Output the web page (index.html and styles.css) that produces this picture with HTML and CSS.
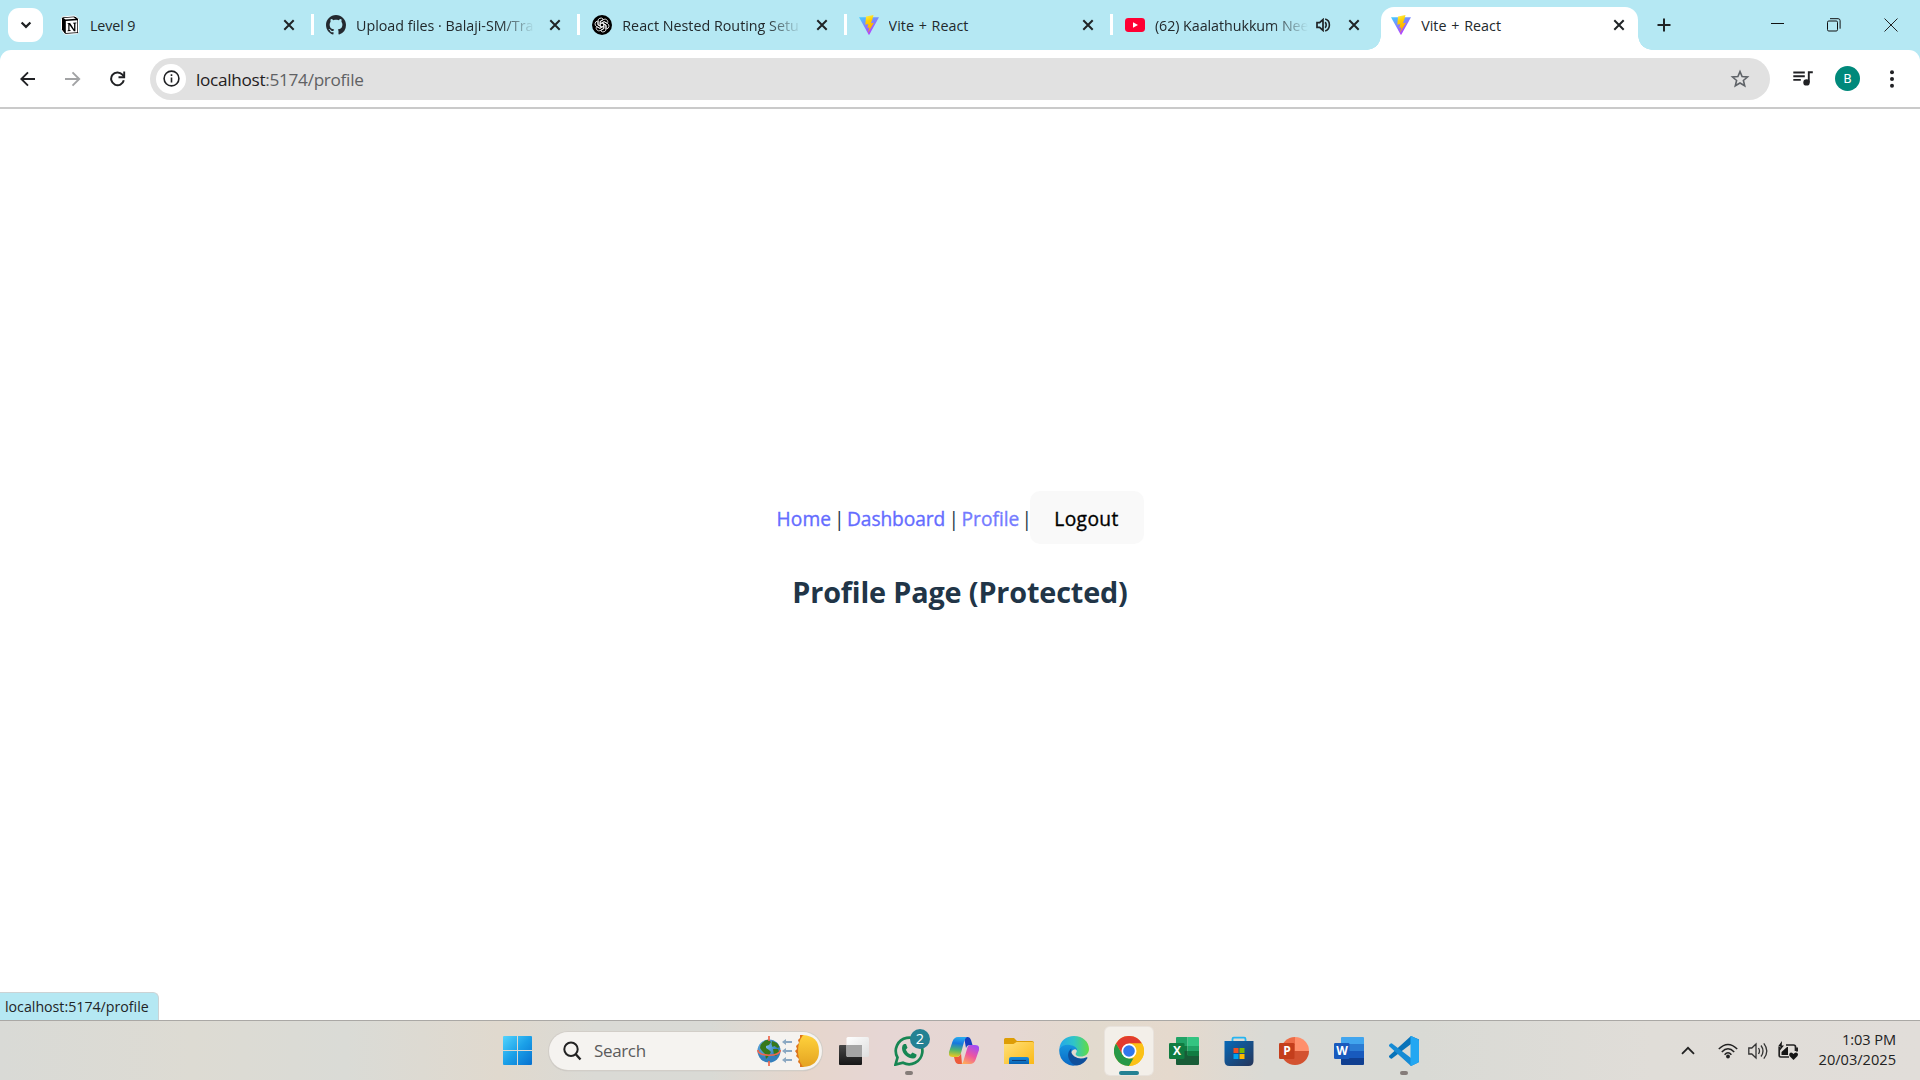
FILE: index.html
```html
<!DOCTYPE html>
<html lang="en">
<head>
<meta charset="utf-8">
<title>Vite + React</title>
<link rel="stylesheet" href="styles.css">
</head>
<body>
<svg class="defs" width="0" height="0" aria-hidden="true">
  <defs>
    <linearGradient id="viteBlue" x1="0" y1="0" x2="0.6" y2="1"><stop offset="0" stop-color="#41d1ff"/><stop offset="1" stop-color="#bd34fe"/></linearGradient>
    <linearGradient id="viteBolt" x1="0.4" y1="0" x2="0.6" y2="1"><stop offset="0" stop-color="#ffea45"/><stop offset="0.3" stop-color="#ffd000"/><stop offset="1" stop-color="#ff9c00"/></linearGradient>
    <symbol id="vite" viewBox="0 0 20 20">
      <path d="M0 2.2 20 2.2 10.4 19.6Q10 20.2 9.600 19.600Z" fill="url(#viteBlue)"/>
      <path d="M14.500 0 7 1.500 6.300 9.700l3-.6-.9 4 2.100-.6-1.600 5.500 6-10.300-3 .6 1.500-4z" fill="url(#viteBolt)"/>
    </symbol>
    <symbol id="close" viewBox="0 0 12 12"><path d="M1.3 1.3l9.4 9.4M10.7 1.3L1.3 10.7" stroke="#202426" stroke-width="2" fill="none"/></symbol>
  </defs>
</svg>

<header class="tabstrip">
  <button class="tab-search" aria-label="Search tabs"><svg width="12" height="8" viewBox="0 0 12 8"><path d="M1.6 1.5 6 5.9l4.4-4.4" fill="none" stroke="#1f2123" stroke-width="2.2"/></svg></button>
  <div class="tab first">
    <svg class="fav" viewBox="0 0 20 20"><path d="M1.500 3.500Q1.500 2 3 1.800L14 1q1 0 2 .7L18.500 3.800V17.500q0 1-1 1.100L6 19.300q-1 0-1.600-.8L1.500 14.800z" fill="#000" stroke="#fff" stroke-width="1"/><path d="M3.500 3 13.500 2.200l2.300 1.600-10.300.8z" fill="#fff"/><path d="M5.800 6 17.300 5.300V17.200l-11.500.8z" fill="#fff"/><path d="M7.500 8h2.600l4 6.200V8.700l-1-.3v-.7l3.300-.2v.7l-1 .4v7.700h-1.500L9.500 9.900v5.200l1.300.4v.6l-3.400.2v-.6l.9-.4V8.800L7.500 8.600z" fill="#000"/></svg>
    <span class="title">Level 9</span>
    <svg class="x"><use href="#close"/></svg>
  </div>
  <div class="tab">
    <svg class="fav" viewBox="0 0 16 16"><path fill="#24292f" d="M8 0C3.58 0 0 3.58 0 8c0 3.54 2.29 6.53 5.47 7.59.4.07.55-.17.55-.38 0-.19-.01-.82-.01-1.49-2.01.37-2.53-.49-2.69-.94-.09-.23-.48-.94-.82-1.13-.28-.15-.68-.52-.01-.53.63-.01 1.08.58 1.23.82.72 1.21 1.87.87 2.33.66.07-.52.28-.87.51-1.07-1.78-.2-3.64-.89-3.64-3.95 0-.87.31-1.59.82-2.15-.08-.2-.36-1.02.08-2.12 0 0 .67-.21 2.2.82.64-.18 1.32-.27 2-.27s1.36.09 2 .27c1.53-1.04 2.2-.82 2.2-.82.44 1.1.16 1.92.08 2.12.51.56.82 1.27.82 2.15 0 3.07-1.87 3.75-3.65 3.95.29.25.54.73.54 1.48 0 1.07-.01 1.93-.01 2.2 0 .21.15.46.55.38A8.01 8.01 0 0 0 16 8c0-4.42-3.58-8-8-8z"/></svg>
    <span class="title fade upload">Upload files · Balaji-SM/Tra</span>
    <svg class="x"><use href="#close"/></svg>
  </div>
  <div class="tab">
    <svg class="fav" viewBox="0 0 20 20"><circle cx="10" cy="10" r="10"/><g fill="none" stroke="#fff" stroke-width=".8"><path id="petal" d="M8.300 10.900V6.300l3.200-1.800a2.900 2.900 0 0 1 4.200 3.400M8.300 8.600 12 6.600l3.600 2"/><use href="#petal" transform="rotate(60 10 10)"/><use href="#petal" transform="rotate(120 10 10)"/><use href="#petal" transform="rotate(180 10 10)"/><use href="#petal" transform="rotate(240 10 10)"/><use href="#petal" transform="rotate(300 10 10)"/></g></svg>
    <span class="title fade react">React Nested Routing Setu</span>
    <svg class="x"><use href="#close"/></svg>
  </div>
  <div class="tab">
    <svg class="fav"><use href="#vite"/></svg>
    <span class="title vite-title">Vite + React</span>
    <svg class="x"><use href="#close"/></svg>
  </div>
  <div class="tab">
    <svg class="fav" viewBox="0 0 20 20"><rect y="3" width="20" height="14" rx="3.4" fill="#ff0033"/><path d="M8 7.2v5.6l5-2.8z" fill="#fff"/></svg>
    <span class="title fade tube">(62) Kaalathukkum Nee</span>
    <svg class="sound" width="15" height="14" viewBox="0 0 15 14"><path d="M1 4.7h2.6L7 1.6v10.8L3.6 9.3H1z" fill="none" stroke="#202426" stroke-width="1.7"/><path d="M9 4.2c1.6 1 1.6 4.6 0 5.6M9.2 1.1c5.6 1.6 5.6 10.2 0 11.8" fill="none" stroke="#202426" stroke-width="1.6"/></svg>
    <svg class="x"><use href="#close"/></svg>
  </div>
  <div class="tab active">
    <svg class="fav"><use href="#vite"/></svg>
    <span class="title vite-title">Vite + React</span>
    <svg class="x"><use href="#close"/></svg>
  </div>
  <svg class="newtab" width="14" height="14" viewBox="0 0 14 14"><path d="M7 .5v13M.5 7h13" stroke="#202426" stroke-width="2"/></svg>
  <div class="window-controls">
    <svg width="14" height="14" viewBox="0 0 14 14"><path d="M0 5.500h13" stroke="#111" stroke-width="1"/></svg>
    <svg width="14" height="14" viewBox="0 0 14 14"><g fill="none" stroke="#111"><rect x=".5" y="3" width="10" height="10" rx="1.3"/><path d="M3 .7h8.100q2 0 2 2v8"/></g></svg>
    <svg width="14" height="14" viewBox="0 0 14 14"><path d="M.5 .5l13 13M13.500 .5l-13 13" stroke="#222" stroke-width="1"/></svg>
  </div>
</header>

<div class="toolbar-bg">
<nav class="toolbar">
  <svg width="16" height="16" viewBox="0 0 16 16"><path d="M15 8H1.600M8 1.300 1.300 8 8 14.700" fill="none" stroke="#202124" stroke-width="1.900"/></svg>
  <svg width="16" height="16" viewBox="0 0 16 16"><path d="M0 8h13.900M7.500 1.300 14.200 8 7.500 14.700" fill="none" stroke="#a2a3a5" stroke-width="1.900"/></svg>
  <svg width="16" height="16" viewBox="0 0 16 16"><path d="M13.800 9.200A6.400 6.400 0 1 1 12.400 3.600L14.100 5.500" fill="none" stroke="#202124" stroke-width="2"/><path d="M14.200 .5v5.700H8.500" fill="none" stroke="#202124" stroke-width="1.900"/></svg>
  <div class="omnibox">
    <span class="info"><svg width="17" height="17" viewBox="0 0 17 17"><circle cx="8.500" cy="8.500" r="7.400" fill="none" stroke="#202124" stroke-width="1.600"/><path d="M8.500 7.500v5M8.500 4.300v1.800" stroke="#202124" stroke-width="1.600"/></svg></span>
    <span class="url"><b>localhost</b>:5174/profile</span>
    <svg class="star" width="20" height="20" viewBox="0 0 20 20"><path d="M10 2.600l2.100 5 5.400.4-4.100 3.500 1.300 5.300L10 14l-4.700 2.800 1.300-5.300L2.500 8l5.400-.4z" fill="none" stroke="#5f6368" stroke-width="1.600"/></svg>
  </div>
  <svg class="media" width="20" height="16" viewBox="0 0 20 16"><path d="M.3 1.500h11.500M.3 5.200h11.500M.3 8.900h7.500M15.800 11.500V1.300h4" fill="none" stroke="#202124" stroke-width="1.900"/><circle cx="13.500" cy="11.400" r="3.200" fill="#202124"/></svg>
  <span class="avatar">B</span>
  <svg class="dots" width="6" height="20" viewBox="0 0 6 20"><g fill="#202124"><circle cx="3" cy="3.200" r="2"/><circle cx="3" cy="10" r="2"/><circle cx="3" cy="16.800" r="2"/></g></svg>
</nav>
</div>

<main class="page">
  <div class="links"><a class="home">Home</a><i>|</i><a class="dash">Dashboard</a><i>|</i><a class="profile">Profile</a><i class="last">|</i><button class="logout">Logout</button></div>
  <h2>Profile Page (Protected)</h2>
  <div class="status">localhost:5174/profile</div>
</main>

<footer class="taskbar">
  <svg class="start" width="29" height="29" viewBox="0 0 29 29"><defs><linearGradient id="win" gradientUnits="userSpaceOnUse" x1="0" y1="0" x2="29" y2="29"><stop offset="0" stop-color="#53d4fd"/><stop offset=".5" stop-color="#1ba0e8"/><stop offset="1" stop-color="#0670cf"/></linearGradient></defs><path d="M1 0h13v14H0V1q0-1 1-1zM15 0h13q1 0 1 1v13H15zM0 15h14v14H1q-1 0-1-1zM15 15h14v13q0 1-1 1H15z" fill="url(#win)"/></svg>
  <div class="search">
    <svg width="19" height="20" viewBox="0 0 19 20"><circle cx="8" cy="8.300" r="6.700" fill="none" stroke="#222" stroke-width="2"/><path d="M12.800 13.300 17.500 18.500" stroke="#222" stroke-width="2.400"/></svg>
    <span>Search</span>
    <svg class="equinox" width="64" height="34" viewBox="0 0 64 34">
      <defs><radialGradient id="sea" cx=".35" cy=".3"><stop offset="0" stop-color="#79c0f2"/><stop offset="1" stop-color="#347fbc"/></radialGradient><linearGradient id="sun" x1="0" y1="0" x2="0" y2="1"><stop offset="0" stop-color="#ffd23c"/><stop offset="1" stop-color="#e4a321"/></linearGradient></defs>
      <circle cx="12" cy="17" r="11.500" fill="url(#sea)"/>
      <path d="M3.500 11Q8 5 12 6l2 2-2 3-3 1 0 2 3 2 2 2-3 5-2 2-1-5-3-3-2-3zM15 7l5 2 2.500 4-2 1-3-2-2 1-1-3zM16 15l5 0 1 3-3 4-2-1z" fill="#37781a"/>
      <path d="M12 2v5M12 27v5" stroke="#ee674e" stroke-width="1.700"/>
      <path d="M.8 16c0 7 22.500 7 22.500 0" fill="none" stroke="#ee674e" stroke-width="1.600"/>
      <g fill="#8ba8c2"><path d="M25 8l4-3v2h6v2h-6v2zM25 17l4-3v2h6v2h-6v2zM25 26l4-3v2h6v2h-6v2z"/></g>
      <path d="M47 1h-4l0 3-2 2 1 3-3 3 1 3-2 2 2 3-1 2 3 3-1 3 2 2 0 3h4z" fill="#dd741b"/>
      <path d="M46 1q16 1 16 16T46 33Q41 26 41 17T46 1z" fill="url(#sun)"/>
    </svg>
  </div>
  <div class="apps">
    <div class="app"><svg viewBox="0 0 30 30"><defs><linearGradient id="tv" x2="0" y2="1"><stop stop-color="#474747"/><stop offset="1" stop-color="#161616"/></linearGradient><linearGradient id="tw" x2="1" y2="1"><stop stop-color="#fff"/><stop offset="1" stop-color="#dedede"/></linearGradient></defs><rect y="9" width="23" height="20" rx="1" fill="url(#tv)"/><rect x="7.500" y="1" width="22.500" height="20" rx="1.500" fill="url(#tw)"/><path d="M7.500 9H23v12H9q-1.500 0-1.500-1.500z" fill="#a5a5a5"/></svg></div>
    <div class="app"><svg viewBox="0 0 30 30"><path d="M1.500 28.600 3.500 21.500A13.300 13.300 0 1 1 9 26.800z" fill="none" stroke="#178653" stroke-width="2.700"/><path d="M10 8q-2 1-2 4c0 6 6 10.500 11 10.500 2.500 0 3.800-2 3.500-4L18.500 16.500 16.500 18.500Q13 17 11.800 13.800L13.500 11.800 12 8z" fill="#178653"/></svg><span class="count">2</span><span class="run"></span></div>
    <div class="app"><svg viewBox="0 0 30 30"><defs><linearGradient id="cp1" x1=".3" y1="0" x2=".2" y2="1"><stop stop-color="#28a9ed"/><stop offset=".3" stop-color="#1677df"/><stop offset=".65" stop-color="#52b66b"/><stop offset="1" stop-color="#f3c91c"/></linearGradient><linearGradient id="cp2" x1=".7" y1="0" x2=".2" y2="1"><stop stop-color="#a34cf4"/><stop offset=".5" stop-color="#ee55a0"/><stop offset="1" stop-color="#ffae58"/></linearGradient></defs><path d="M15 1h4q2 0 3 3l1.500 5H21q-3 0-4 3z" fill="#173fc0"/><path d="M9 1h9q-2 1-3 5l-3 11q-1 4-5 4H4q-5 0-4-5L3.500 5.500Q5 1 9 1z" fill="url(#cp1)"/><path d="M13 28H9q-2 0-3-3l-1-4h3q3 0 4-4z" fill="#ed5b3b"/><path d="M21 9h5q5 0 4 5l-3.500 10q-1.500 4-5.500 4h-9q2 0 3-5l3-10q1-4 3-4z" fill="url(#cp2)"/></svg></div>
    <div class="app"><svg viewBox="0 0 30 30"><defs><linearGradient id="fold" x2="1" y2="1"><stop stop-color="#ffe078"/><stop offset="1" stop-color="#fbb917"/></linearGradient><linearGradient id="fb" x2="0" y2="1"><stop stop-color="#188cd9"/><stop offset="1" stop-color="#0862b4"/></linearGradient></defs><path d="M0 3.500Q0 2 1.500 2H10l3 3h15q2 0 2 2v8H0z" fill="#dd9d05"/><path d="M0 8h9.500l3-2H28.500Q30 6 30 7.500V28H0z" fill="url(#fold)"/><path d="M5 28v-5q0-2 2-2h16q2 0 2 2v5z" fill="url(#fb)"/><path d="M8 24.500h14" stroke="#0c3d79" stroke-width="1"/></svg></div>
    <div class="app"><svg viewBox="0 0 30 30"><defs><linearGradient id="ed1" x2="1"><stop stop-color="#23a8ec"/><stop offset=".5" stop-color="#30c5c7"/><stop offset="1" stop-color="#61dc43"/></linearGradient><linearGradient id="ed2" x2="0" y2="1"><stop stop-color="#1796df"/><stop offset="1" stop-color="#0a68c4"/></linearGradient></defs><path d="M.3 13C1 5 7 0 15 0c9 0 15 6 15 13 0 5-4 7.500-8 7.500-5 0-6-2-5-3.500 2-2 0-6-4-7Q5 8 .3 13z" fill="url(#ed1)"/><path d="M.3 13Q4 8 11 9q7 1 7.500 6Q17 12 14 14c-5 4-1 12 4 15Q12 31 6.500 27 -.5 22 .3 13z" fill="url(#ed2)"/><path d="M12.500 12.500c-7 5-2 16 5.500 17q7-1 10.500-7.500.3-1-1-.8Q21 24 15.500 20.500 11 17 12.500 12.500z" fill="#0e4f9c"/></svg></div>
    <div class="app current"><svg viewBox="0 0 30 30"><circle cx="15" cy="15" r="15" fill="#fbc116"/><path d="M2 7.500A15 15 0 0 1 28 7.500H15L8.500 18.800z" fill="#e23b2e"/><path d="M2 7.500 8.500 18.800 15 22.500h6.500L15 30A15 15 0 0 1 2 7.500z" fill="#279847"/><path d="M21.500 18.800 15 30A15 15 0 0 0 28 7.500H15z" fill="#fbc116"/><circle cx="15" cy="15" r="7.500" fill="#fff"/><circle cx="15" cy="15" r="5.800" fill="#3077ed"/></svg><span class="run wide"></span></div>
    <div class="app"><svg viewBox="0 0 30 30"><path d="M8 1h10.500v9H7V2q0-1 1-1z" fill="#21a366"/><path d="M18.500 1H29q1 0 1 1v8H18.500z" fill="#33c481"/><path d="M7 10h11.500v9H7z" fill="#107c41"/><path d="M18.500 10H30v9H18.500z" fill="#21a366"/><path d="M7 15h11.500v4H30v9q0 1-1 1H8q-1 0-1-1z" fill="#185c37"/><path d="M18.500 15H30v5H18.500z" fill="#107c41"/><rect y="7" width="15.500" height="16" rx="1.300" fill="#107c41"/></svg><span class="letter">X</span></div>
    <div class="app"><svg viewBox="0 0 30 30"><defs><linearGradient id="st" x2="1" y2="1"><stop stop-color="#0769b8"/><stop offset="1" stop-color="#263559"/></linearGradient></defs><path d="M8.500 7V3q0-1.300 1.300-1.300h10.400q1.300 0 1.300 1.300v4" fill="none" stroke="#25b5f2" stroke-width="1.800"/><path d="M.5 5h29v20q0 5-5 5h-19q-5 0-5-5z" fill="url(#st)"/><path d="M9.500 12h5v5h-5z" fill="#f25022"/><path d="M15.500 12h5v5h-5z" fill="#7fba00"/><path d="M9.500 18h5v5h-5z" fill="#00a4ef"/><path d="M15.500 18h5v5h-5z" fill="#ffb900"/></svg></div>
    <div class="app"><svg viewBox="0 0 30 30"><path d="M16 1a14 14 0 0 0-14 14h14z" fill="#ed6c47"/><path d="M16 1a14 14 0 0 1 14 14H16z" fill="#ff8f6b"/><path d="M2 15h28a14 14 0 0 1-28 0z" fill="#d35230"/><rect y="7" width="15.500" height="16" rx="1.300" fill="#c43e1c"/></svg><span class="letter">P</span></div>
    <div class="app"><svg viewBox="0 0 30 30"><path d="M8 1h21q1 0 1 1v6H7V2q0-1 1-1z" fill="#41a5ee"/><path d="M7 8h23v7H7z" fill="#2b7cd3"/><path d="M7 15h23v7H7z" fill="#185abd"/><path d="M7 22h23v6q0 1-1 1H8q-1 0-1-1z" fill="#103f91"/><rect y="7" width="15.500" height="16" rx="1.300" fill="#185abd"/></svg><span class="letter">W</span></div>
    <div class="app"><svg viewBox="0 0 30 30"><path d="M22 0 30 3.500V26L22 30V8L3 22.500Q2 23 1.300 22.300L.2 21.200q-.7-.8 0-1.500z" fill="#0873b9"/><path d="M22 30 .2 10.300q-.7-.8 0-1.500L1.300 7.700Q2 7 3 7.500L22 22z" fill="#168bd5"/><path d="M22 0q6 2.700 7 3.200 1 .5 1 1.800v20q0 1.300-1 1.800L22 30q-1 0-.500-1V1q-.5-1 .5-1z" fill="#23a7f2"/></svg><span class="run"></span></div>
  </div>
  <div class="tray">
    <svg class="up" width="14" height="9" viewBox="0 0 14 9"><path d="M1 7.800 7 1.800l6 6" fill="none" stroke="#222" stroke-width="1.800"/></svg>
    <svg width="20" height="16" viewBox="0 0 20 16"><g fill="none" stroke="#222" stroke-width="1.500"><path d="M.8 6Q10-3 19.200 6M3.800 9Q10 2.500 16.200 9M6.600 11.700Q10 8 13.400 11.700"/></g><circle cx="10" cy="13.500" r="1.900" fill="#222"/></svg>
    <svg width="20" height="18" viewBox="0 0 20 18"><g fill="none" stroke="#333" stroke-width="1.300"><path d="M.8 6h3L8 2v14l-4.200-4h-3zM10.500 6q2 3 0 6M13 3.500q4 5.500 0 11M15.800 1.300q6 7.700 0 15.400"/></g></svg>
    <svg width="21" height="20" viewBox="0 0 21 20"><path d="M8 4h7.500q2 0 2 2v4M1.200 9v5.500q0 1.500 1.500 1.500H11M1.200 6v3" fill="none" stroke="#222" stroke-width="1.700"/><path d="M3.500 14V11L9 6h1v8zM4 0 0 5.500h2.500L1.500 10 6 4.500H3.700z" fill="#151515"/><path d="M19 6.500v4" stroke="#222" stroke-width="2"/><path d="M15.500 19 11.500 15q-1-3 1.500-3.500 1.500 0 2.500 1.500 1-1.500 2.500-1.500 3 .5 1.500 3.500z" fill="#151515"/></svg>
    <div class="clock"><span>1:03 PM</span><span class="date">20/03/2025</span></div>
  </div>
</footer>
</body>
</html>
```
FILE: styles.css
```css
* { box-sizing: border-box; }
body {
  margin: 0;
  width: 1920px;
  height: 1080px;
  overflow: hidden;
  display: flex;
  flex-direction: column;
  background: #fff;
  font-family: "Open Sans", "Noto Sans", sans-serif;
}
svg { display: block; flex: none; }
.defs { position: absolute; }
button { border: 0; padding: 0; font-family: inherit; }

/* Tab strip */
.tabstrip { height: 50px; flex: none; display: flex; align-items: center; background: #b5e8f3; padding-left: 8px; }
.tab-search { width: 35px; height: 34px; border-radius: 11px; background: #fff; display: flex; align-items: center; justify-content: center; }
.tab { width: 266.3px; height: 50px; flex: none; display: flex; align-items: center; padding: 0 16px 0 12px; border-right: 3px solid transparent; border-image: linear-gradient(transparent 14px, #fff 14px, #fff 35px, transparent 35px) 1; }
.tab.first { width: 271px; padding-left: 17px; }
.tab:nth-child(6) { border-image: none; }
.fav { width: 20px; height: 20px; margin-right: 10px; }
.title { flex: 1; min-width: 0; overflow: hidden; white-space: nowrap; padding-top: 2px; font-size: 14.3px; line-height: 24px; color: #22292c; letter-spacing: -.12px; }
.upload { letter-spacing: -.02px; }
.react { letter-spacing: 0; }
.tube { letter-spacing: -.06px; }
.vite-title { letter-spacing: .02px; word-spacing: 1px; }
.fade { -webkit-mask-image: linear-gradient(90deg, #000 calc(100% - 36px), transparent); mask-image: linear-gradient(90deg, #000 calc(100% - 36px), transparent); }
.x { width: 12px; height: 12px; margin-left: 14px; }
.sound { margin-left: 8px; }
.sound + .x { margin-left: 17px; }
.tab.active { position: relative; width: 257px; height: 43px; align-self: flex-end; margin-left: 2px; padding: 0 13px 7px 10px; border: 0; background: #fff; border-radius: 13px 13px 0 0; }
.active::before, .active::after { content: ""; position: absolute; bottom: 0; width: 14px; height: 14px; }
.active::before { left: -14px; background: radial-gradient(circle at 0 0, transparent 13.5px, #fff 14px); }
.active::after { right: -14px; background: radial-gradient(circle at 100% 0, transparent 13.5px, #fff 14px); }
.newtab { margin-left: 19px; }
.window-controls { display: flex; gap: 43px; margin-left: auto; padding-right: 22px; }
.window-controls svg:first-child { margin-right: -1px; }

/* Toolbar */
.toolbar-bg { flex: none; background: #b5e8f3; }
.toolbar { height: 59px; background: #fff; border-radius: 11px 11px 0 0; border-bottom: 2px solid #cacaca; display: flex; align-items: center; padding: 0 25px 0 20px; gap: 29px; }
.omnibox { width: 1620px; height: 42px; margin-left: -5px; border-radius: 21px; background: #e1e1e1; display: flex; align-items: center; padding: 0 20px 0 6px; }
.info { width: 30px; height: 30px; border-radius: 50%; background: #fff; display: flex; align-items: center; justify-content: center; }
.url { flex: 1; margin-left: 10px; padding-top: 1px; font-size: 17.2px; color: #5f6164; letter-spacing: -.3px; }
.url b { font-weight: 400; color: #1f2022; }
.media { margin-left: -6px; }
.avatar { width: 25px; height: 25px; margin-left: -7px; border-radius: 50%; background: #00897b; color: #fff; font: 13px/25px Roboto, sans-serif; text-align: center; }

/* Page */
.page { position: relative; flex: 1; display: flex; flex-direction: column; align-items: center; padding-top: 382px; color: #213547; }
.links { display: flex; align-items: center; height: 53px; font-size: 19.2px; -webkit-text-stroke: .35px currentColor; white-space: nowrap; }
.links a { color: #646cff; padding-top: 1px; }
.links a.profile { color: #747bff; }
.links i { width: 15.5px; padding-top: 1px; text-align: center; font-style: normal; -webkit-text-stroke: 0; }
.links i.last { width: 9px; padding-left: 1px; text-align: left; }
.home { width: 55px; letter-spacing: .1px; }
.dash { width: 99px; letter-spacing: -.1px; }
.profile { width: 59px; }
.logout { width: 114px; height: 53px; padding-top: 1px; border-radius: 10px; background: #f9f9f9; color: #000; font-size: 19.2px; letter-spacing: .4px; -webkit-text-stroke: .35px #000; }
.page h2 { margin: 28px 0 0; font-size: 28.8px; line-height: 40px; font-weight: 700; letter-spacing: -.15px; white-space: nowrap; }
.status { position: absolute; left: 0; bottom: 0; width: 159px; height: 28px; padding-left: 5px; border: 1px solid #ccd3d5; border-width: 1px 1px 0 0; border-radius: 0 6px 0 0; background: #b5e8f3; color: #1f2426; font-size: 14.2px; line-height: 28px; }

/* Taskbar */
.taskbar { height: 60px; flex: none; display: flex; align-items: center; padding: 0 24px 0 503px; border-top: 1px solid #aaa8a5; background: linear-gradient(90deg, #d9dad6 0, #dddbd3 10%, #dadbd6 18%, #e0d9ce 26%, #dadad5 31%, #d9dad5 37%, #e6d6cc 42%, #e6d6d4 46%, #e6d7d3 52%, #e2dace 57%, #e5d9cd 61%, #dadad5 66%, #d9dad5 74%, #e0ddd8 86%, #e1ddd9 100%); }
.search { width: 273px; height: 38px; margin-left: 17px; border-radius: 19px; background: #f5f3f0; box-shadow: 0 0 0 1px #d2cec8, 0 1px 1px #aaa; display: flex; align-items: center; padding-left: 14px; color: #5b5b5b; font-size: 17px; }
.search span { width: 63px; margin-left: 12px; letter-spacing: -.35px; }
.equinox { margin-left: 100px; }
.apps { display: flex; gap: 7px; margin-left: 8px; }
.app { position: relative; width: 48px; height: 48px; display: flex; align-items: center; justify-content: center; border-radius: 5px; }
.app svg { width: 30px; height: 30px; }
.current { background: #f3efe9; box-shadow: 0 0 0 1px #e8e2dc; }
.run { position: absolute; bottom: 0; left: 20px; width: 8px; height: 4px; border-radius: 2px; background: #857c79; }
.run.wide { left: 14px; width: 20px; background: #248193; }
.count { position: absolute; left: 25px; top: 2px; width: 20px; height: 20px; border-radius: 50%; background: #248193; color: #fff; font-size: 14.5px; line-height: 20px; text-align: center; }
.letter { position: absolute; left: 9px; top: 16px; width: 16px; color: #fff; font-size: 12px; font-weight: 700; line-height: 16px; text-align: center; }
.tray { margin-left: auto; display: flex; align-items: center; gap: 10px; color: #222; }
.up { margin-right: 13px; }
.clock { width: 87px; display: flex; flex-direction: column; align-items: flex-end; padding-bottom: 3px; font-size: 14.6px; line-height: 20px; letter-spacing: -.08px; }
.date { letter-spacing: 0; }
```
